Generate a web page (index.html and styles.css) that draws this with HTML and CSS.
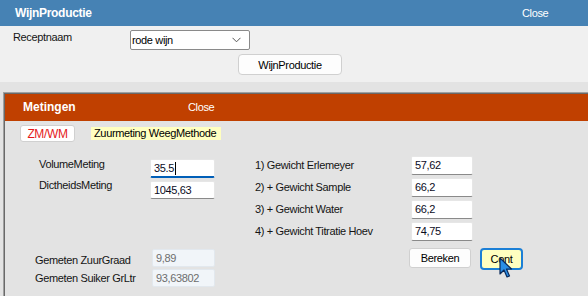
FILE: index.html
```html
<!DOCTYPE html>
<html>
<head>
<meta charset="utf-8">
<link rel="stylesheet" href="styles.css">
</head>
<body>
<div class="titlebar"><span class="title">WijnProductie</span><span class="close">Close</span></div>
<div class="top">
  <div class="recept-row">
    <span class="lbl recept-lbl">Receptnaam</span>
    <div class="select"><span>rode wijn</span><svg class="chev" width="9" height="6" viewBox="0 0 9 6"><path d="M0.5 0.8 L4.5 4.8 L8.5 0.8" fill="none" stroke="#555" stroke-width="1"/></svg></div>
  </div>
  <div class="btn-row"><button class="btn wp-btn">WijnProductie</button></div>
</div>
<div class="band">
  <div class="panel">
    <div class="panel-inner">
      <div class="ph"><span class="ph-title">Metingen</span><span class="ph-close">Close</span></div>
      <div class="toolbar"><button class="btn zm">ZM/WM</button><span class="hint">Zuurmeting WeegMethode</span></div>
      <div class="main">
        <div class="left">
          <div class="grid1">
            <span class="lbl l1">VolumeMeting</span>
            <div class="inp focus">35.5<span class="caret"></span></div>
            <span class="lbl l2">DictheidsMeting</span>
            <div class="inp">1045,63</div>
          </div>
          <div class="grid2">
            <span class="lbl g1">Gemeten ZuurGraad</span>
            <div class="inp ro">9,89</div>
            <span class="lbl g2">Gemeten Suiker GrLtr</span>
            <div class="inp ro">93,63802</div>
          </div>
        </div>
        <div class="right">
          <div class="grid3">
            <span class="lbl">1) Gewicht Erlemeyer</span>
            <div class="inp">57,62</div>
            <span class="lbl">2) + Gewicht Sample</span>
            <div class="inp">66,2</div>
            <span class="lbl">3) + Gewicht Water</span>
            <div class="inp">66,2</div>
            <span class="lbl">4) + Gewicht Titratie Hoev</span>
            <div class="inp">74,75</div>
          </div>
          <div class="btns"><button class="btn bereken">Bereken</button><button class="btn cont">Cont</button></div>
        </div>
      </div>
    </div>
  </div>
</div>
<svg class="cursor" width="14" height="22" viewBox="0 0 14 22"><path d="M1 1 L1 17 L5 13 L8 20 L10.5 19 L7.5 12 L12.5 12 Z" fill="#2a8fe6" stroke="#0b2a5a" stroke-width="1.2" stroke-linejoin="round"/></svg>
</body>
</html>
```
FILE: styles.css
```css
* { box-sizing: border-box; }
html, body { margin: 0; padding: 0; }
body {
  width: 588px;
  height: 296px;
  overflow: hidden;
  background: #e3e3e3;
  font-family: "Liberation Sans", Arial, sans-serif;
  font-size: 11px;
  letter-spacing: -0.35px;
  line-height: 13px;
  color: #141414;
  position: relative;
}
.titlebar {
  height: 26px;
  background: #4682b4;
  color: #fff;
  display: flex;
  align-items: center;
  padding-left: 15px;
  padding-top: 1px;
}
.title { font-weight: bold; font-size: 12px; letter-spacing: -0.3px; width: 507px; }
.close { font-size: 11px; }
.top {
  height: 56px;
  background: #f0f0f0;
  padding: 4px 0 0 13px;
}
.recept-row { display: flex; align-items: flex-start; }
.recept-lbl { width: 117px; margin-top: 1px; }
.select {
  width: 120px;
  height: 20px;
  background: #fff;
  border: 1px solid #8a8a8a;
  border-radius: 2px;
  display: flex;
  align-items: center;
  justify-content: space-between;
  padding: 0 8px 0 1px;
  color: #000;
}
.chev { display: block; }
.btn-row { margin-top: 4px; padding-left: 225px; }
.btn {
  font-family: inherit;
  font-size: 11px;
  letter-spacing: -0.35px;
  color: #000;
  background: #fdfdfd;
  border: 1px solid #d0d0d0;
  border-radius: 4px;
  padding: 0;
  margin: 0;
  display: flex;
  align-items: center;
  justify-content: center;
}
.wp-btn { width: 104px; height: 21px; }
.band { padding: 10px 0 0 3px; }
.panel {
  height: 204px;
  border-top: 1px solid #a0a0a0;
  border-left: 1px solid #a0a0a0;
}
.panel-inner {
  height: 100%;
  border-top: 1px solid #696969;
  border-left: 1px solid #696969;
}
.ph {
  height: 27px;
  background: #c04000;
  color: #fff;
  display: flex;
  align-items: center;
  padding-left: 18px;
}
.ph-title { font-weight: bold; font-size: 12px; letter-spacing: 0; width: 165px; }
.toolbar {
  display: flex;
  align-items: center;
  padding: 4px 0 0 15px;
}
.zm {
  width: 55px;
  height: 17px;
  color: #e51a1a;
  font-size: 12px;
  background: #fff;
  border-radius: 3px;
}
.hint {
  margin-left: 16px;
  background: #ffffc0;
  height: 13px;
  padding: 0 5px 0 3px;
  color: #000;
}
.main {
  display: flex;
  margin-top: 14px;
  padding-left: 30px;
}
.left { width: 220px; }
.grid1 {
  margin-top: 3px;
  padding-left: 4px;
  display: grid;
  grid-template-columns: 111px 65px;
  grid-template-rows: 19px 18px;
  row-gap: 3px;
}
.l1 { margin-top: -1px; }
.l2 { margin-top: -2px; }
.grid2 {
  margin-top: 50px;
  display: grid;
  grid-template-columns: 117px 63px;
  grid-template-rows: 18px 18px;
  row-gap: 2px;
}
.g1 { padding-top: 5px; }
.g2 { padding-top: 3px; }
.inp {
  background: #fff;
  border: 1px solid #e6e6e6;
  border-bottom: 1px solid #8a8a8a;
  border-radius: 2px;
  padding-left: 3px;
  display: flex;
  align-items: center;
  color: #0b0b1e;
}
.inp.focus { border-bottom: 2px solid #005fb8; padding-top: 1px; }
.caret { display: inline-block; width: 1px; height: 13px; background: #000; margin-left: 1px; }
.inp.ro {
  background: #f1f5f9;
  border: 1px solid #e2e8ee;
  color: #6d6d6d;
}
.grid3 {
  display: grid;
  grid-template-columns: 156px 62px;
  grid-auto-rows: 19px;
  row-gap: 3px;
}
.grid3 .lbl { align-self: center; }
.btns {
  display: flex;
  align-items: flex-start;
  margin-top: 7px;
  padding-left: 154px;
}
.bereken { width: 62px; height: 20px; border-radius: 3px; }
.cont {
  width: 43px;
  height: 22px;
  margin-left: 9px;
  background: #ffffc0;
  border: 2px solid #1c7fd6;
  border-radius: 4px;
}
.cursor { position: absolute; left: 499px; top: 257px; }
```
